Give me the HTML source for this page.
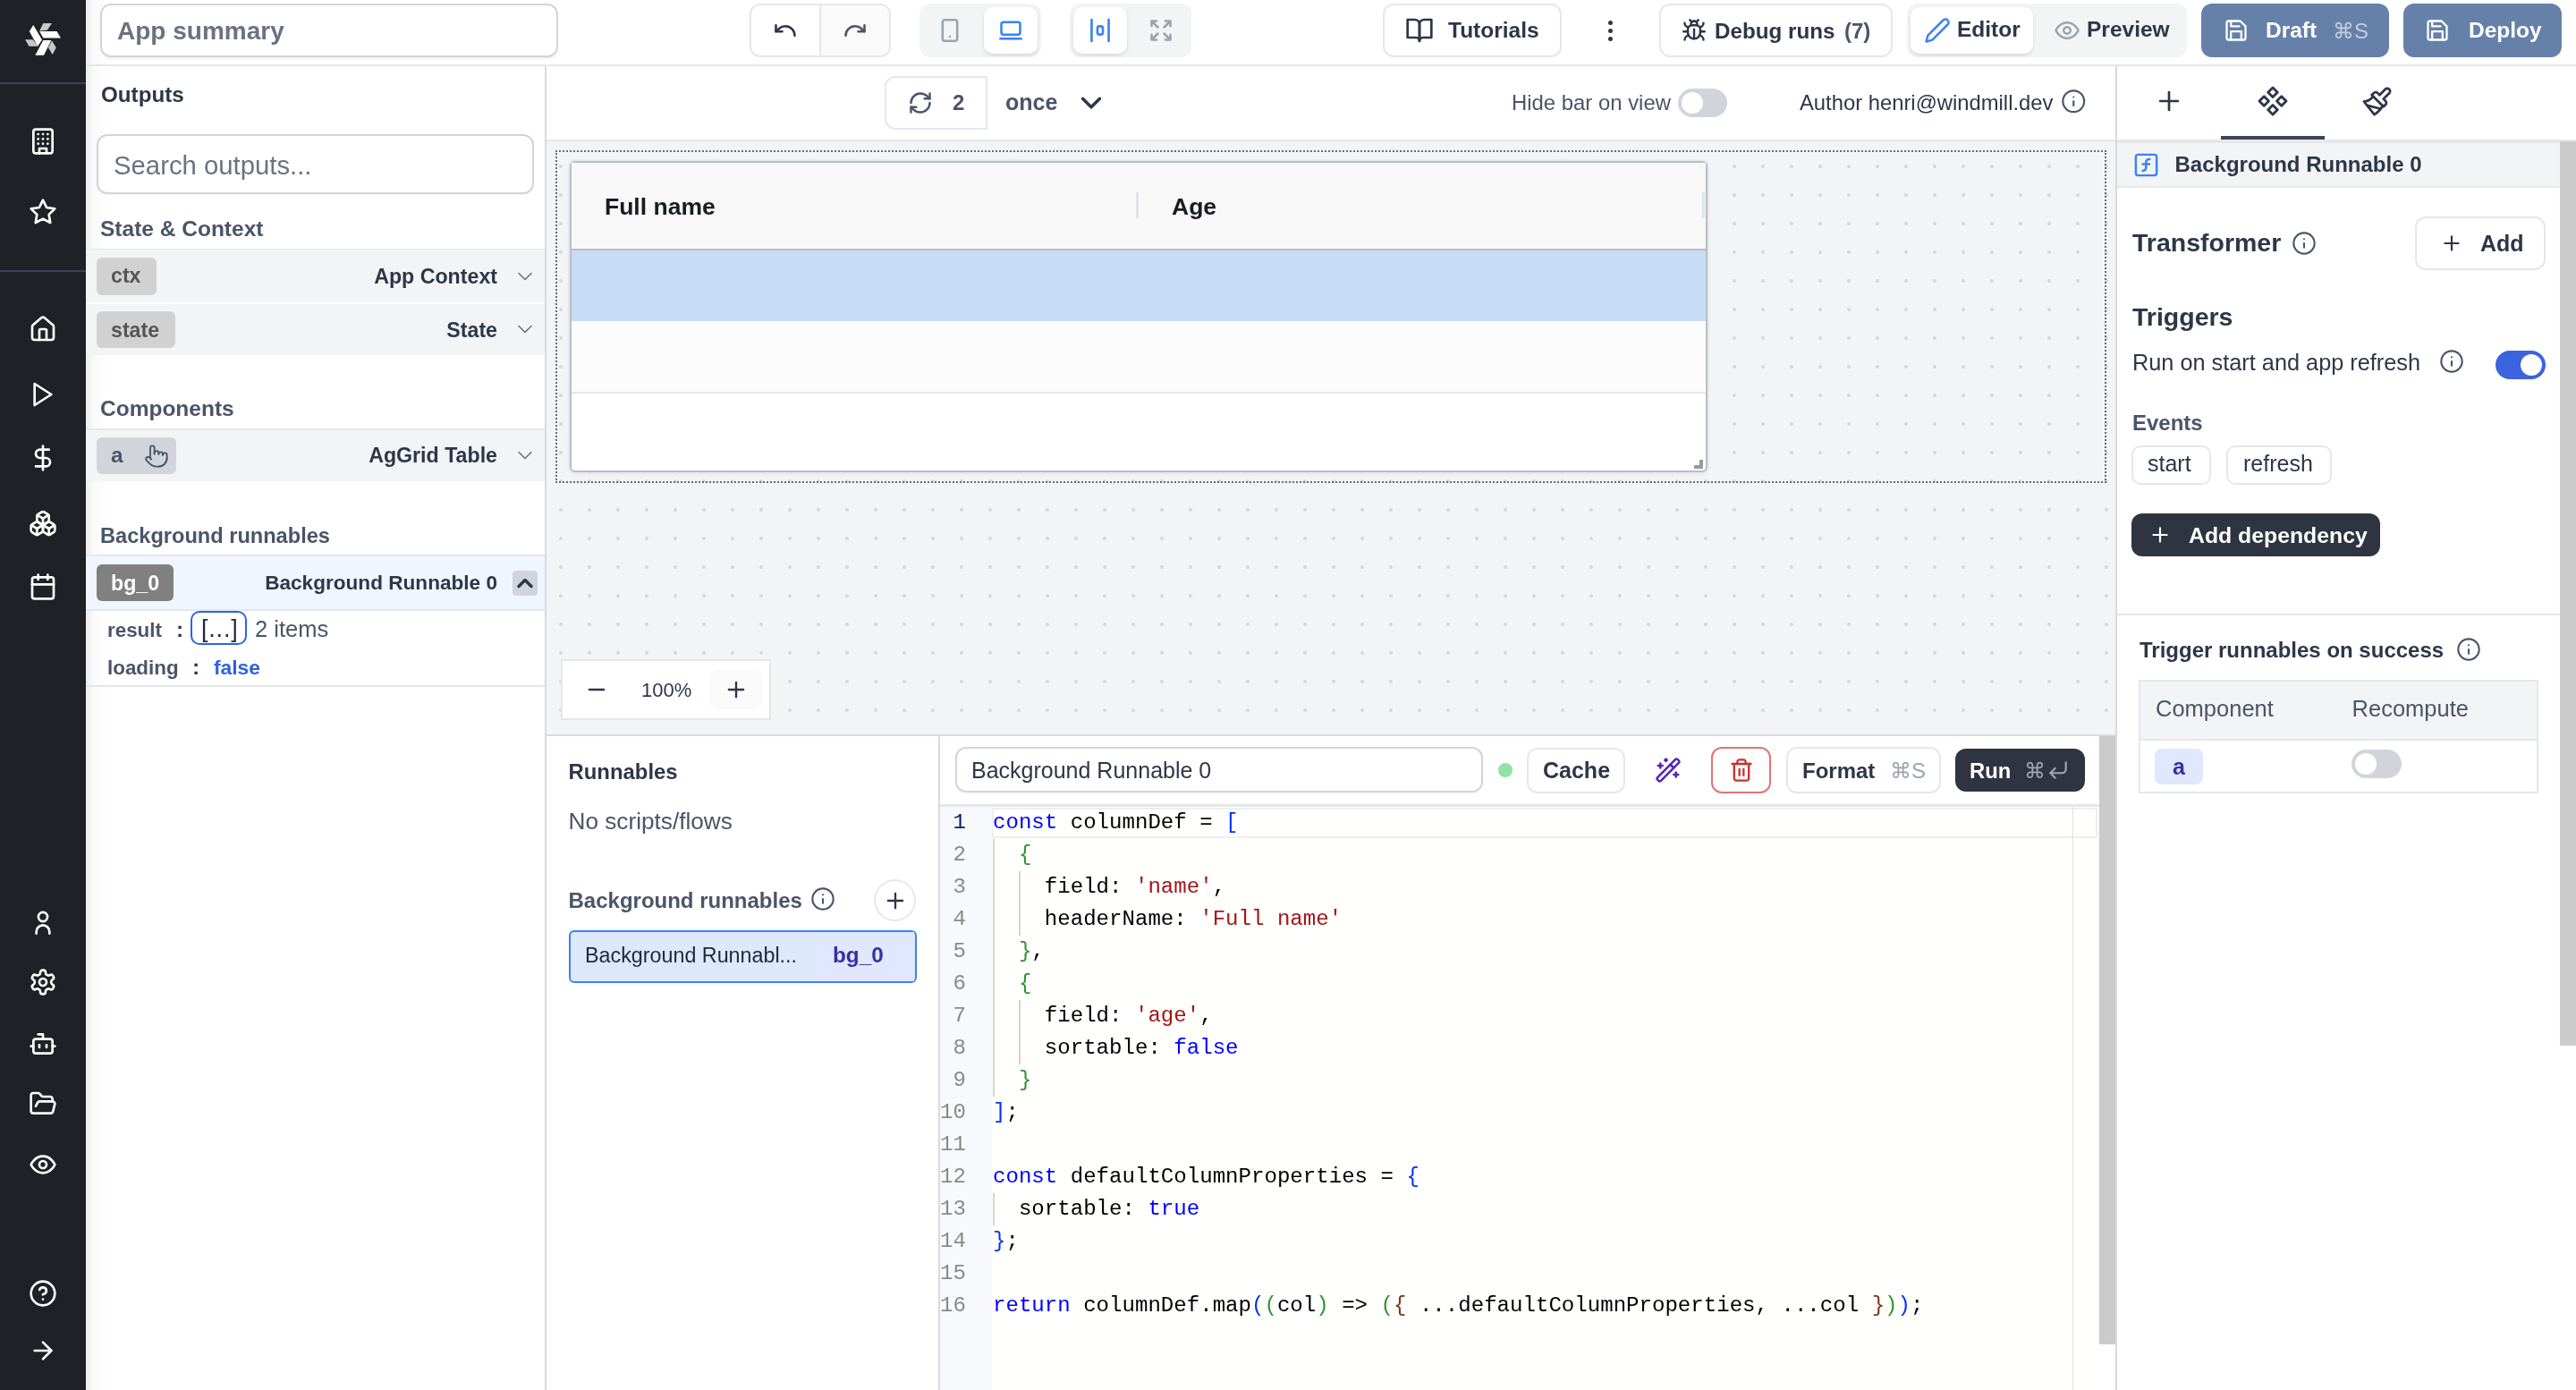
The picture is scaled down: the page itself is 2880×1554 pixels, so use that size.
<!DOCTYPE html><html><head><meta charset="utf-8"><style>
html,body{margin:0;padding:0;width:2880px;height:1554px;overflow:hidden;background:#fff;font-family:"Liberation Sans",sans-serif;}
#root{position:absolute;left:0;top:0;width:2880px;height:1554px;will-change:transform;}
*{box-sizing:border-box;}
</style></head><body><div id="root">
<div style="position:absolute;left:0px;top:0px;width:96px;height:1554px;background:#202127;border-radius:0px;box-sizing:border-box;"></div>
<div style="position:absolute;left:0px;top:92px;width:96px;height:2px;background:#3b4352;border-radius:0px;box-sizing:border-box;"></div>
<div style="position:absolute;left:0px;top:302px;width:96px;height:2px;background:#3b4352;border-radius:0px;box-sizing:border-box;"></div>
<svg style="position:absolute;left:0;top:0" width="96" height="96" viewBox="0 0 96 96">
<polygon fill="#fff" points="37.3,28 32.8,34.9 42.1,51.8 47,44.5"/>
<polygon fill="#c8c8c8" points="48.3,25.9 58,25.9 52.8,33.8 44.2,34.5"/>
<polygon fill="#fff" points="44.2,34.9 63.5,34.9 68,42.5 48.3,42.5"/>
<polygon fill="#c8c8c8" points="58,45.6 62.8,53.2 58.7,61.1 53.9,53.2"/>
<polygon fill="#fff" points="57.3,44.9 48.3,44.9 39.4,61.8 49,61.8"/>
<polygon fill="#c8c8c8" points="28,44.2 36.6,44.2 42.5,51.8 32.5,51.8"/>
</svg>
<svg style="position:absolute;left:32.00px;top:142.00px;" width="32" height="32" viewBox="0 0 24 24" fill="none" stroke="#fff" stroke-width="2" stroke-linecap="round" stroke-linejoin="round"><rect width="16" height="20" x="4" y="2" rx="2" ry="2"/><path d="M9 22v-4h6v4"/><path d="M8 6h.01"/><path d="M16 6h.01"/><path d="M12 6h.01"/><path d="M12 10h.01"/><path d="M12 14h.01"/><path d="M16 10h.01"/><path d="M16 14h.01"/><path d="M8 10h.01"/><path d="M8 14h.01"/></svg>
<svg style="position:absolute;left:32.00px;top:220.60px;" width="32" height="32" viewBox="0 0 24 24" fill="none" stroke="#fff" stroke-width="2" stroke-linecap="round" stroke-linejoin="round"><polygon points="12 2 15.09 8.26 22 9.27 17 14.14 18.18 21.02 12 17.77 5.82 21.02 7 14.14 2 9.27 8.91 8.26 12 2"/></svg>
<svg style="position:absolute;left:32.00px;top:351.70px;" width="32" height="32" viewBox="0 0 24 24" fill="none" stroke="#fff" stroke-width="2" stroke-linecap="round" stroke-linejoin="round"><path d="M15 21v-8a1 1 0 0 0-1-1h-4a1 1 0 0 0-1 1v8"/><path d="M3 10a2 2 0 0 1 .709-1.528l7-5.999a2 2 0 0 1 2.582 0l7 5.999A2 2 0 0 1 21 10v9a2 2 0 0 1-2 2H5a2 2 0 0 1-2-2z"/></svg>
<svg style="position:absolute;left:32.00px;top:424.60px;" width="32" height="32" viewBox="0 0 24 24" fill="none" stroke="#fff" stroke-width="2" stroke-linecap="round" stroke-linejoin="round"><polygon points="5 3 19 12 5 21 5 3"/></svg>
<svg style="position:absolute;left:32.00px;top:496.00px;" width="32" height="32" viewBox="0 0 24 24" fill="none" stroke="#fff" stroke-width="2" stroke-linecap="round" stroke-linejoin="round"><line x1="12" x2="12" y1="2" y2="22"/><path d="M17 5H9.5a3.5 3.5 0 0 0 0 7h5a3.5 3.5 0 0 1 0 7H6"/></svg>
<svg style="position:absolute;left:32.00px;top:569.00px;" width="32" height="32" viewBox="0 0 24 24" fill="none" stroke="#fff" stroke-width="2" stroke-linecap="round" stroke-linejoin="round"><path d="M2.97 12.92A2 2 0 0 0 2 14.63v3.24a2 2 0 0 0 .97 1.71l3 1.8a2 2 0 0 0 2.060 0L12 19v-5.5l-5-3-4.03 2.42Z"/><path d="m7 16.5-4.74-2.85"/><path d="m7 16.5 5-3"/><path d="M7 16.5v5.17"/><path d="M12 13.5V19l3.97 2.38a2 2 0 0 0 2.06 0l3-1.8a2 2 0 0 0 .97-1.71v-3.24a2 2 0 0 0-.97-1.71L17 10.5l-5 3Z"/><path d="m17 16.5-5-3"/><path d="m17 16.5 4.74-2.85"/><path d="M17 16.5v5.17"/><path d="M7.97 4.42A2 2 0 0 0 7 6.13v4.37l5 3 5-3V6.13a2 2 0 0 0-.97-1.71l-3-1.8a2 2 0 0 0-2.06 0l-3 1.8Z"/><path d="M12 8 7.26 5.15"/><path d="m12 8 4.74-2.85"/><path d="M12 13.5V8"/></svg>
<svg style="position:absolute;left:32.00px;top:640.00px;" width="32" height="32" viewBox="0 0 24 24" fill="none" stroke="#fff" stroke-width="2" stroke-linecap="round" stroke-linejoin="round"><rect width="18" height="18" x="3" y="4" rx="2" ry="2"/><line x1="16" x2="16" y1="2" y2="6"/><line x1="8" x2="8" y1="2" y2="6"/><line x1="3" x2="21" y1="10" y2="10"/></svg>
<svg style="position:absolute;left:32.00px;top:1014.50px;" width="32" height="32" viewBox="0 0 24 24" fill="none" stroke="#fff" stroke-width="2" stroke-linecap="round" stroke-linejoin="round"><circle cx="12" cy="7.5" r="3.8"/><path d="M17.5 21.5v-1.5a5.5 5.5 0 0 0-11 0v1.5"/></svg>
<svg style="position:absolute;left:32.00px;top:1081.60px;" width="32" height="32" viewBox="0 0 24 24" fill="none" stroke="#fff" stroke-width="2" stroke-linecap="round" stroke-linejoin="round"><path d="M12.22 2h-.44a2 2 0 0 0-2 2v.18a2 2 0 0 1-1 1.73l-.43.25a2 2 0 0 1-2 0l-.15-.08a2 2 0 0 0-2.73.73l-.22.38a2 2 0 0 0 .73 2.73l.15.1a2 2 0 0 1 1 1.72v.51a2 2 0 0 1-1 1.74l-.15.09a2 2 0 0 0-.73 2.730l.22.38a2 2 0 0 0 2.73.73l.15-.08a2 2 0 0 1 2 0l.43.25a2 2 0 0 1 1 1.73V20a2 2 0 0 0 2 2h.44a2 2 0 0 0 2-2v-.18a2 2 0 0 1 1-1.73l.43-.25a2 2 0 0 1 2 0l.15.08a2 2 0 0 0 2.73-.73l.22-.39a2 2 0 0 0-.73-2.73l-.15-.08a2 2 0 0 1-1-1.74v-.5a2 2 0 0 1 1-1.74l.15-.09a2 2 0 0 0 .73-2.73l-.22-.38a2 2 0 0 0-2.73-.73l-.15.08a2 2 0 0 1-2 0l-.43-.25a2 2 0 0 1-1-1.73V4a2 2 0 0 0-2-2z"/><circle cx="12" cy="12" r="3"/></svg>
<svg style="position:absolute;left:32.00px;top:1151.00px;" width="32" height="32" viewBox="0 0 24 24" fill="none" stroke="#fff" stroke-width="2" stroke-linecap="round" stroke-linejoin="round"><path d="M12 8V4H8"/><rect width="16" height="12" x="4" y="8" rx="2"/><path d="M2 14h2"/><path d="M20 14h2"/><path d="M15 13v2"/><path d="M9 13v2"/></svg>
<svg style="position:absolute;left:32.00px;top:1217.50px;" width="32" height="32" viewBox="0 0 24 24" fill="none" stroke="#fff" stroke-width="2" stroke-linecap="round" stroke-linejoin="round"><path d="m6 14 1.5-2.9A2 2 0 0 1 9.24 10H20a2 2 0 0 1 1.94 2.5l-1.54 6a2 2 0 0 1-1.95 1.5H4a2 2 0 0 1-2-2V5a2 2 0 0 1 2-2h3.9a2 2 0 0 1 1.69.9l.81 1.2a2 2 0 0 0 1.67.9H18a2 2 0 0 1 2 2v2"/></svg>
<svg style="position:absolute;left:32.00px;top:1286.00px;" width="32" height="32" viewBox="0 0 24 24" fill="none" stroke="#fff" stroke-width="2" stroke-linecap="round" stroke-linejoin="round"><path d="M2 12s3-7 10-7 10 7 10 7-3 7-10 7-10-7-10-7Z"/><circle cx="12" cy="12" r="3"/></svg>
<svg style="position:absolute;left:32.00px;top:1430.00px;" width="32" height="32" viewBox="0 0 24 24" fill="none" stroke="#fff" stroke-width="2" stroke-linecap="round" stroke-linejoin="round"><circle cx="12" cy="12" r="10"/><path d="M9.09 9a3 3 0 0 1 5.83 1c0 2-3 3-3 3"/><path d="M12 17h.01"/></svg>
<svg style="position:absolute;left:32.00px;top:1494.00px;" width="32" height="32" viewBox="0 0 24 24" fill="none" stroke="#fff" stroke-width="2" stroke-linecap="round" stroke-linejoin="round"><path d="M5 12h14"/><path d="m12 5 7 7-7 7"/></svg>
<div style="position:absolute;left:96px;top:0px;width:24px;height:74px;background:linear-gradient(to right,rgba(0,0,0,0.07),rgba(0,0,0,0.025) 35%,rgba(0,0,0,0));"></div>
<div style="position:absolute;left:96px;top:72px;width:2784px;height:2px;background:#e5e7eb;border-radius:0px;box-sizing:border-box;"></div>
<div style="position:absolute;left:112px;top:4px;width:512px;height:60px;background:#fff;border:2px solid #d1d5db;border-radius:12px;box-sizing:border-box;box-shadow:0 2px 3px rgba(0,0,0,0.06);"></div>
<div style="position:absolute;left:131px;top:21.30px;font:700 28px/28px 'Liberation Sans',sans-serif;color:#6b7280;white-space:nowrap;">App summary</div>
<div style="position:absolute;left:838px;top:4px;width:158px;height:60px;background:#fff;border:2px solid #e5e7eb;border-radius:12px;box-sizing:border-box;"></div>
<div style="position:absolute;left:918px;top:6px;width:76px;height:56px;background:#fafafa;border-radius:0 10px 10px 0"></div>
<div style="position:absolute;left:916px;top:6px;width:2px;height:56px;background:#e5e7eb;border-radius:0px;box-sizing:border-box;"></div>
<svg style="position:absolute;left:864.00px;top:20.00px;" width="28" height="28" viewBox="0 0 24 24" fill="none" stroke="#2d3748" stroke-width="2.2" stroke-linecap="round" stroke-linejoin="round"><path d="M3 7v6h6"/><path d="M21 17a9 9 0 0 0-9-9 9 9 0 0 0-6 2.3L3 13"/></svg>
<svg style="position:absolute;left:942.00px;top:20.00px;" width="28" height="28" viewBox="0 0 24 24" fill="none" stroke="#4b5563" stroke-width="2.2" stroke-linecap="round" stroke-linejoin="round"><path d="M21 7v6h-6"/><path d="M3 17a9 9 0 0 1 9-9 9 9 0 0 1 6 2.3l3 2.7"/></svg>
<div style="position:absolute;left:1028px;top:4px;width:136px;height:60px;background:#f3f4f6;border-radius:12px;box-sizing:border-box;"></div>
<div style="position:absolute;left:1100px;top:8px;width:60px;height:52px;background:#fff;border-radius:10px;box-sizing:border-box;box-shadow:0 2px 4px rgba(0,0,0,0.12);"></div>
<svg style="position:absolute;left:1048.00px;top:20.00px;" width="28" height="28" viewBox="0 0 24 24" fill="none" stroke="#9ca3af" stroke-width="2.2" stroke-linecap="round" stroke-linejoin="round"><rect width="14" height="20" x="5" y="2" rx="2" ry="2"/><path d="M12 18h.01"/></svg>
<svg style="position:absolute;left:1116.00px;top:20.00px;" width="28" height="28" viewBox="0 0 24 24" fill="none" stroke="#3b82f6" stroke-width="2.2" stroke-linecap="round" stroke-linejoin="round"><rect width="18" height="12" x="3" y="4" rx="2" ry="2"/><line x1="2" x2="22" y1="20" y2="20"/></svg>
<div style="position:absolute;left:1196px;top:4px;width:136px;height:60px;background:#f3f4f6;border-radius:12px;box-sizing:border-box;"></div>
<div style="position:absolute;left:1200px;top:8px;width:60px;height:52px;background:#fff;border-radius:10px;box-sizing:border-box;box-shadow:0 2px 4px rgba(0,0,0,0.12);"></div>
<svg style="position:absolute;left:1213px;top:18px" width="32" height="32" viewBox="0 0 24 24" fill="none" stroke="#3b82f6" stroke-width="2" stroke-linecap="round"><path d="M5.6 3v18"/><path d="M19.9 3v18"/><rect x="10.5" y="8.5" width="4.5" height="7" rx="1.6"/></svg>
<svg style="position:absolute;left:1284.00px;top:20.00px;" width="28" height="28" viewBox="0 0 24 24" fill="none" stroke="#9ca3af" stroke-width="2.2" stroke-linecap="round" stroke-linejoin="round"><path d="m21 21-6-6m6 6v-4.8m0 4.8h-4.8"/><path d="M3 16.2V21m0 0h4.8M3 21l6-6"/><path d="M21 7.8V3m0 0h-4.8M21 3l-6 6"/><path d="M3 7.8V3m0 0h4.8M3 3l6 6"/></svg>
<div style="position:absolute;left:1546px;top:4px;width:200px;height:60px;background:#fff;border:2px solid #e5e7eb;border-radius:12px;box-sizing:border-box;"></div>
<svg style="position:absolute;left:1571.00px;top:18.00px;" width="32" height="32" viewBox="0 0 24 24" fill="none" stroke="#2d3748" stroke-width="2" stroke-linecap="round" stroke-linejoin="round"><path d="M2 3h6a4 4 0 0 1 4 4v14a3 3 0 0 0-3-3H2z"/><path d="M22 3h-6a4 4 0 0 0-4 4v14a3 3 0 0 1 3-3h7z"/></svg>
<div style="position:absolute;left:1619px;top:22.26px;font:700 24.5px/24.5px 'Liberation Sans',sans-serif;color:#2d3748;white-space:nowrap;">Tutorials</div>
<div style="position:absolute;left:1797.5px;top:22.5px;width:5px;height:5px;background:#2d3748;border-radius:2.5px;box-sizing:border-box;"></div>
<div style="position:absolute;left:1797.5px;top:31.5px;width:5px;height:5px;background:#2d3748;border-radius:2.5px;box-sizing:border-box;"></div>
<div style="position:absolute;left:1797.5px;top:40.5px;width:5px;height:5px;background:#2d3748;border-radius:2.5px;box-sizing:border-box;"></div>
<div style="position:absolute;left:1855px;top:4px;width:261px;height:60px;background:#fff;border:2px solid #e5e7eb;border-radius:12px;box-sizing:border-box;"></div>
<svg style="position:absolute;left:1880.00px;top:20.00px;" width="28" height="28" viewBox="0 0 24 24" fill="none" stroke="#2d3748" stroke-width="2.1" stroke-linecap="round" stroke-linejoin="round"><path d="m8 2 1.88 1.88"/><path d="M14.12 3.88 16 2"/><path d="M9 7.13v-1a3.003 3.003 0 1 1 6 0v1"/><path d="M12 20c-3.3 0-6-2.7-6-6v-3a4 4 0 0 1 4-4h4a4 4 0 0 1 4 4v3c0 3.3-2.7 6-6 6"/><path d="M12 20v-9"/><path d="M6.53 9C4.6 8.8 3 7.1 3 5"/><path d="M6 13H2"/><path d="M3 21c0-2.1 1.7-3.9 3.8-4"/><path d="M20.97 5c0 2.1-1.6 3.8-3.5 4"/><path d="M22 13h-4"/><path d="M17.2 17c2.1.1 3.8 1.9 3.8 4"/></svg>
<div style="position:absolute;left:1917px;top:22.51px;font:700 24.2px/24.2px 'Liberation Sans',sans-serif;color:#2d3748;white-space:nowrap;">Debug runs</div>
<div style="position:absolute;left:2062px;top:22.68px;font:700 24px/24px 'Liberation Sans',sans-serif;color:#4a5568;white-space:nowrap;">(7)</div>
<div style="position:absolute;left:2132px;top:4px;width:313px;height:60px;background:#f3f4f6;border-radius:12px;box-sizing:border-box;"></div>
<div style="position:absolute;left:2136px;top:8px;width:137px;height:52px;background:#fff;border-radius:10px;box-sizing:border-box;box-shadow:0 2px 4px rgba(0,0,0,0.12);"></div>
<svg style="position:absolute;left:2151.00px;top:19.00px;" width="30" height="30" viewBox="0 0 24 24" fill="none" stroke="#3b82f6" stroke-width="2" stroke-linecap="round" stroke-linejoin="round"><path d="M17 3a2.85 2.83 0 1 1 4 4L7.5 20.5 2 22l1.5-5.5Z"/></svg>
<div style="position:absolute;left:2188px;top:21.26px;font:700 24.5px/24.5px 'Liberation Sans',sans-serif;color:#2d3748;white-space:nowrap;">Editor</div>
<svg style="position:absolute;left:2296.00px;top:19.00px;" width="30" height="30" viewBox="0 0 24 24" fill="none" stroke="#9ca3af" stroke-width="2" stroke-linecap="round" stroke-linejoin="round"><path d="M2 12s3-7 10-7 10 7 10 7-3 7-10 7-10-7-10-7Z"/><circle cx="12" cy="12" r="3"/></svg>
<div style="position:absolute;left:2333px;top:21.26px;font:700 24.5px/24.5px 'Liberation Sans',sans-serif;color:#2d3748;white-space:nowrap;">Preview</div>
<div style="position:absolute;left:2461px;top:4px;width:210px;height:60px;background:#6581a9;border-radius:12px;box-sizing:border-box;"></div>
<svg style="position:absolute;left:2486.00px;top:20.00px;" width="28" height="28" viewBox="0 0 24 24" fill="none" stroke="#fff" stroke-width="2" stroke-linecap="round" stroke-linejoin="round"><path d="M19 21H5a2 2 0 0 1-2-2V5a2 2 0 0 1 2-2h11l5 5v11a2 2 0 0 1-2 2z"/><polyline points="17 21 17 13 7 13 7 21"/><polyline points="7 3 7 8 15 8"/></svg>
<div style="position:absolute;left:2533px;top:22.26px;font:700 24.5px/24.5px 'Liberation Sans',sans-serif;color:#fff;white-space:nowrap;">Draft</div>
<div style="position:absolute;left:2608px;top:22.68px;font:400 24px/24px 'Liberation Sans',sans-serif;color:#c3cde0;white-space:nowrap;">⌘S</div>
<div style="position:absolute;left:2687px;top:4px;width:177px;height:60px;background:#6581a9;border-radius:12px;box-sizing:border-box;"></div>
<svg style="position:absolute;left:2711.00px;top:20.00px;" width="28" height="28" viewBox="0 0 24 24" fill="none" stroke="#fff" stroke-width="2" stroke-linecap="round" stroke-linejoin="round"><path d="M19 21H5a2 2 0 0 1-2-2V5a2 2 0 0 1 2-2h11l5 5v11a2 2 0 0 1-2 2z"/><polyline points="17 21 17 13 7 13 7 21"/><polyline points="7 3 7 8 15 8"/></svg>
<div style="position:absolute;left:2760px;top:22.26px;font:700 24.5px/24.5px 'Liberation Sans',sans-serif;color:#fff;white-space:nowrap;">Deploy</div>
<div style="position:absolute;left:96px;top:74px;width:513px;height:1480px;background:#fff;border-radius:0px;box-sizing:border-box;"></div>
<div style="position:absolute;left:96px;top:74px;width:24px;height:1480px;background:linear-gradient(to right,rgba(0,0,0,0.07),rgba(0,0,0,0.025) 35%,rgba(0,0,0,0));"></div>
<div style="position:absolute;left:609px;top:74px;width:2px;height:1480px;background:#dadada;border-radius:0px;box-sizing:border-box;"></div>
<div style="position:absolute;left:113px;top:94.01px;font:700 24.2px/24.2px 'Liberation Sans',sans-serif;color:#2d3748;white-space:nowrap;">Outputs</div>
<div style="position:absolute;left:108px;top:150px;width:489px;height:67px;background:#fff;border:2px solid #d1d5db;border-radius:12px;box-sizing:border-box;box-shadow:0 1px 2px rgba(0,0,0,0.05);"></div>
<div style="position:absolute;left:127px;top:169.70px;font:400 29.3px/29.3px 'Liberation Sans',sans-serif;color:#6b7280;white-space:nowrap;">Search outputs...</div>
<div style="position:absolute;left:112px;top:244.26px;font:700 24.5px/24.5px 'Liberation Sans',sans-serif;color:#4a5568;white-space:nowrap;">State &amp; Context</div>
<div style="position:absolute;left:96px;top:278px;width:513px;height:2px;background:#e5e7eb;border-radius:0px;box-sizing:border-box;"></div>
<div style="position:absolute;left:96px;top:279px;width:513px;height:59px;background:#f3f4f6;border-radius:0px;box-sizing:border-box;"></div>
<div style="position:absolute;left:108px;top:288px;width:67px;height:42px;background:#d1d1d1;border-radius:6px;box-sizing:border-box;"></div>
<div style="position:absolute;left:124px;top:296.86px;font:700 23.2px/23.2px 'Liberation Sans',sans-serif;color:#555;white-space:nowrap;">ctx</div>
<div style="position:absolute;right:2324px;top:297.86px;font:700 23.2px/23.2px 'Liberation Sans',sans-serif;color:#2d3748;white-space:nowrap;">App Context</div>
<svg style="position:absolute;left:573.00px;top:295.00px;" width="28" height="28" viewBox="0 0 24 24" fill="none" stroke="#737373" stroke-width="1.4" stroke-linecap="round" stroke-linejoin="round"><path d="m6 9 6 6 6-6"/></svg>
<div style="position:absolute;left:96px;top:338px;width:513px;height:2px;background:#fff;border-radius:0px;box-sizing:border-box;"></div>
<div style="position:absolute;left:96px;top:340px;width:513px;height:57px;background:#f3f4f6;border-radius:0px;box-sizing:border-box;"></div>
<div style="position:absolute;left:108px;top:348px;width:88px;height:41px;background:#d1d1d1;border-radius:6px;box-sizing:border-box;"></div>
<div style="position:absolute;left:124px;top:357.86px;font:700 23.2px/23.2px 'Liberation Sans',sans-serif;color:#555;white-space:nowrap;">state</div>
<div style="position:absolute;right:2324px;top:357.86px;font:700 23.2px/23.2px 'Liberation Sans',sans-serif;color:#2d3748;white-space:nowrap;">State</div>
<svg style="position:absolute;left:573.00px;top:354.00px;" width="28" height="28" viewBox="0 0 24 24" fill="none" stroke="#737373" stroke-width="1.4" stroke-linecap="round" stroke-linejoin="round"><path d="m6 9 6 6 6-6"/></svg>
<div style="position:absolute;left:112px;top:445.26px;font:700 24.5px/24.5px 'Liberation Sans',sans-serif;color:#4a5568;white-space:nowrap;">Components</div>
<div style="position:absolute;left:96px;top:479px;width:513px;height:2px;background:#e5e7eb;border-radius:0px;box-sizing:border-box;"></div>
<div style="position:absolute;left:96px;top:481px;width:513px;height:57px;background:#f3f4f6;border-radius:0px;box-sizing:border-box;"></div>
<div style="position:absolute;left:108px;top:489px;width:89px;height:41px;background:#d1d5db;border-radius:6px;box-sizing:border-box;"></div>
<div style="position:absolute;left:124px;top:497.26px;font:700 24.5px/24.5px 'Liberation Sans',sans-serif;color:#4a5568;white-space:nowrap;">a</div>
<svg style="position:absolute;left:161.00px;top:496.00px;" width="28" height="28" viewBox="0 0 24 24" fill="none" stroke="#4a5568" stroke-width="1.6" stroke-linecap="round" stroke-linejoin="round"><path d="M22 14a8 8 0 0 1-8 8"/><path d="M18 11v-1a2 2 0 0 0-2-2a2 2 0 0 0-2 2"/><path d="M14 10V9a2 2 0 0 0-2-2a2 2 0 0 0-2 2v1"/><path d="M10 9.5V4a2 2 0 0 0-2-2a2 2 0 0 0-2 2v10"/><path d="M18 11a2 2 0 1 1 4 0v3a8 8 0 0 1-8 8h-2c-2.8 0-4.5-.86-5.99-2.34l-3.6-3.6a2 2 0 0 1 2.83-2.82L7 15"/></svg>
<div style="position:absolute;right:2324px;top:498.36px;font:700 23.2px/23.2px 'Liberation Sans',sans-serif;color:#2d3748;white-space:nowrap;">AgGrid Table</div>
<svg style="position:absolute;left:573.00px;top:495.00px;" width="28" height="28" viewBox="0 0 24 24" fill="none" stroke="#737373" stroke-width="1.4" stroke-linecap="round" stroke-linejoin="round"><path d="m6 9 6 6 6-6"/></svg>
<div style="position:absolute;left:112px;top:587.62px;font:700 23.6px/23.6px 'Liberation Sans',sans-serif;color:#4a5568;white-space:nowrap;">Background runnables</div>
<div style="position:absolute;left:96px;top:620px;width:513px;height:2px;background:#e5e7eb;border-radius:0px;box-sizing:border-box;"></div>
<div style="position:absolute;left:96px;top:622px;width:513px;height:59px;background:#eff6ff;border-radius:0px;box-sizing:border-box;"></div>
<div style="position:absolute;left:108px;top:631px;width:86px;height:41px;background:#808080;border-radius:6px;box-sizing:border-box;"></div>
<div style="position:absolute;left:124px;top:640.86px;font:700 23.2px/23.2px 'Liberation Sans',sans-serif;color:#fff;white-space:nowrap;">bg_0</div>
<div style="position:absolute;right:2324px;top:641.37px;font:700 22.6px/22.6px 'Liberation Sans',sans-serif;color:#2d3748;white-space:nowrap;">Background Runnable 0</div>
<div style="position:absolute;left:573px;top:638px;width:28px;height:28px;background:#d1d5db;border-radius:4px;box-sizing:border-box;"></div>
<svg style="position:absolute;left:573.00px;top:638.00px;" width="28" height="28" viewBox="0 0 24 24" fill="none" stroke="#2d3748" stroke-width="3" stroke-linecap="round" stroke-linejoin="round"><path d="m18 15-6-6-6 6"/></svg>
<div style="position:absolute;left:96px;top:681px;width:513px;height:2px;background:#e5e7eb;border-radius:0px;box-sizing:border-box;"></div>
<div style="position:absolute;left:120px;top:693.54px;font:700 22.4px/22.4px 'Liberation Sans',sans-serif;color:#4a5568;white-space:nowrap;">result</div>
<div style="position:absolute;left:197px;top:691.76px;font:700 24.5px/24.5px 'Liberation Sans',sans-serif;color:#2d3748;white-space:nowrap;">:</div>
<div style="position:absolute;left:213px;top:683px;width:63px;height:38px;background:#fff;border:2px solid #2f62e6;border-radius:10px;box-sizing:border-box;"></div>
<div style="position:absolute;left:225px;top:690.14px;font:400 27px/27px 'Liberation Sans',sans-serif;color:#1f2937;white-space:nowrap;letter-spacing:0.8px;">[...]</div>
<div style="position:absolute;left:285px;top:690.91px;font:400 25.5px/25.5px 'Liberation Sans',sans-serif;color:#4a5568;white-space:nowrap;">2 items</div>
<div style="position:absolute;left:120px;top:735.54px;font:700 22.4px/22.4px 'Liberation Sans',sans-serif;color:#4a5568;white-space:nowrap;">loading</div>
<div style="position:absolute;left:215px;top:733.76px;font:700 24.5px/24.5px 'Liberation Sans',sans-serif;color:#2d3748;white-space:nowrap;">:</div>
<div style="position:absolute;left:239px;top:735.20px;font:700 22.8px/22.8px 'Liberation Sans',sans-serif;color:#2f62e0;white-space:nowrap;">false</div>
<div style="position:absolute;left:96px;top:766px;width:513px;height:2px;background:#e5e7eb;border-radius:0px;box-sizing:border-box;"></div>
<div style="position:absolute;left:611px;top:74px;width:1754px;height:82px;background:#fff;border-radius:0px;box-sizing:border-box;"></div>
<div style="position:absolute;left:611px;top:156px;width:1754px;height:2px;background:#e5e7eb;border-radius:0px;box-sizing:border-box;"></div>
<div style="position:absolute;left:989px;top:85px;width:115px;height:60px;border:2px solid #e5e7eb;border-radius:12px 0 0 12px;background:#fff"></div>
<svg style="position:absolute;left:1015.00px;top:101.00px;" width="28" height="28" viewBox="0 0 24 24" fill="none" stroke="#4a5568" stroke-width="2.1" stroke-linecap="round" stroke-linejoin="round"><path d="M3 12a9 9 0 0 1 9-9 9.75 9.75 0 0 1 6.74 2.74L21 8"/><path d="M21 3v5h-5"/><path d="M21 12a9 9 0 0 1-9 9 9.75 9.75 0 0 1-6.74-2.74L3 16"/><path d="M8 16H3v5"/></svg>
<div style="position:absolute;left:1065px;top:102.68px;font:700 24px/24px 'Liberation Sans',sans-serif;color:#4a5568;white-space:nowrap;">2</div>
<div style="position:absolute;left:1124px;top:101.84px;font:700 25px/25px 'Liberation Sans',sans-serif;color:#4a5568;white-space:nowrap;">once</div>
<svg style="position:absolute;left:1201.00px;top:96.00px;" width="38" height="38" viewBox="0 0 24 24" fill="none" stroke="#2d3748" stroke-width="2.2" stroke-linecap="round" stroke-linejoin="round"><path d="m6 9 6 6 6-6"/></svg>
<div style="position:absolute;left:1690px;top:103.27px;font:400 23.9px/23.9px 'Liberation Sans',sans-serif;color:#4a5568;white-space:nowrap;">Hide bar on view</div>
<div style="position:absolute;left:1876px;top:99px;width:55px;height:32px;background:#d1d5db;border-radius:16px;box-sizing:border-box;"></div>
<div style="position:absolute;left:1880px;top:103px;width:24px;height:24px;border-radius:12px;background:#fff;"></div>
<div style="position:absolute;left:2012px;top:103.35px;font:400 23.8px/23.8px 'Liberation Sans',sans-serif;color:#2d3748;white-space:nowrap;">Author henri@windmill.dev</div>
<svg style="position:absolute;left:2304.25px;top:98.75px;" width="28.5" height="28.5" viewBox="0 0 24 24" fill="none" stroke="#4a5568" stroke-width="1.8" stroke-linecap="round" stroke-linejoin="round"><circle cx="12" cy="12" r="10"/><path d="M12 16v-4"/><path d="M12 8h.01"/></svg>
<div style="position:absolute;left:611px;top:158px;width:1754px;height:663px;background-color:#f3f4f6;background-image:radial-gradient(circle,#d9d9d9 1.6px,transparent 2.4px);background-size:32px 32px;background-position:0px 12px;"></div>
<div style="position:absolute;left:611px;top:821px;width:1754px;height:2px;background:#dadada;border-radius:0px;box-sizing:border-box;"></div>
<div style="position:absolute;left:621px;top:168px;width:1734px;height:372px;border:2px dotted #6b6b6b;"></div>
<div style="position:absolute;left:637px;top:180px;width:1272px;height:348px;background:#fff;border:2px solid #b8bec6;border-radius:6px;box-sizing:border-box;overflow:hidden;box-shadow:0 0 0 2px #e8e9ed,0 2px 5px rgba(0,0,0,0.06);"></div>
<div style="position:absolute;left:639px;top:182px;width:1268px;height:96px;background:#f8f8f8;border-radius:0px;box-sizing:border-box;"></div>
<div style="position:absolute;left:639px;top:278px;width:1268px;height:2px;background:#babfc7;border-radius:0px;box-sizing:border-box;"></div>
<div style="position:absolute;left:639px;top:280px;width:1268px;height:79px;background:#c7dcf5;border-radius:0px;box-sizing:border-box;"></div>
<div style="position:absolute;left:639px;top:359px;width:1268px;height:80px;background:#fcfcfc;border-radius:0px;box-sizing:border-box;"></div>
<div style="position:absolute;left:639px;top:438px;width:1268px;height:2px;background:#e5e7eb;border-radius:0px;box-sizing:border-box;"></div>
<div style="position:absolute;left:676px;top:218.07px;font:700 26.5px/26.5px 'Liberation Sans',sans-serif;color:#181d1f;white-space:nowrap;">Full name</div>
<div style="position:absolute;left:1310px;top:218.07px;font:700 26.5px/26.5px 'Liberation Sans',sans-serif;color:#181d1f;white-space:nowrap;">Age</div>
<div style="position:absolute;left:1270px;top:215px;width:3px;height:29px;background:#dde2eb;border-radius:0px;box-sizing:border-box;"></div>
<div style="position:absolute;left:1903px;top:215px;width:3px;height:29px;background:#dde2eb;border-radius:0px;box-sizing:border-box;"></div>
<div style="position:absolute;left:1900px;top:514px;width:4px;height:10px;background:#999;border-radius:0px;box-sizing:border-box;"></div>
<div style="position:absolute;left:1894px;top:520px;width:10px;height:4px;background:#999;border-radius:0px;box-sizing:border-box;"></div>
<div style="position:absolute;left:627px;top:737px;width:235px;height:68px;background:#fff;border:2px solid #e5e7eb;border-radius:0px;box-sizing:border-box;"></div>
<svg style="position:absolute;left:653.00px;top:757.00px;" width="28" height="28" viewBox="0 0 24 24" fill="none" stroke="#2d3748" stroke-width="2" stroke-linecap="round" stroke-linejoin="round"><path d="M5 12h14"/></svg>
<div style="position:absolute;left:717px;top:760.88px;font:400 22px/22px 'Liberation Sans',sans-serif;color:#2d3748;white-space:nowrap;">100%</div>
<div style="position:absolute;left:793px;top:749px;width:60px;height:44px;background:#fafafa;border-radius:10px;box-sizing:border-box;"></div>
<svg style="position:absolute;left:809.00px;top:757.00px;" width="28" height="28" viewBox="0 0 24 24" fill="none" stroke="#2d3748" stroke-width="2" stroke-linecap="round" stroke-linejoin="round"><path d="M5 12h14"/><path d="M12 5v14"/></svg>
<div style="position:absolute;left:1049px;top:823px;width:2px;height:731px;background:#dadada;border-radius:0px;box-sizing:border-box;"></div>
<div style="position:absolute;left:635.5px;top:851.27px;font:700 23.9px/23.9px 'Liberation Sans',sans-serif;color:#2d3748;white-space:nowrap;">Runnables</div>
<div style="position:absolute;left:635.5px;top:904.52px;font:400 26.2px/26.2px 'Liberation Sans',sans-serif;color:#4a5568;white-space:nowrap;">No scripts/flows</div>
<div style="position:absolute;left:635.5px;top:994.88px;font:700 24px/24px 'Liberation Sans',sans-serif;color:#4a5568;white-space:nowrap;">Background runnables</div>
<svg style="position:absolute;left:906.00px;top:991.00px;" width="28" height="28" viewBox="0 0 24 24" fill="none" stroke="#4a5568" stroke-width="1.8" stroke-linecap="round" stroke-linejoin="round"><circle cx="12" cy="12" r="10"/><path d="M12 16v-4"/><path d="M12 8h.01"/></svg>
<div style="position:absolute;left:977px;top:983px;width:47px;height:47px;border:2px solid #e5e7eb;border-radius:50%;background:#fff"></div>
<svg style="position:absolute;left:986.50px;top:992.50px;" width="28" height="28" viewBox="0 0 24 24" fill="none" stroke="#2d3748" stroke-width="2" stroke-linecap="round" stroke-linejoin="round"><path d="M5 12h14"/><path d="M12 5v14"/></svg>
<div style="position:absolute;left:636px;top:1040px;width:389px;height:59px;background:#dde8fb;border:2px solid #3b82f6;border-radius:6px;box-sizing:border-box;"></div>
<div style="position:absolute;left:910px;top:1042px;width:112px;height:55px;background:#e0e7ff;border-radius:0px;box-sizing:border-box;"></div>
<div style="position:absolute;left:654px;top:1057.28px;font:400 23.3px/23.3px 'Liberation Sans',sans-serif;color:#1f2937;white-space:nowrap;">Background Runnabl...</div>
<div style="position:absolute;left:931px;top:1056.43px;font:700 24.3px/24.3px 'Liberation Sans',sans-serif;color:#3730a3;white-space:nowrap;">bg_0</div>
<div style="position:absolute;left:1051px;top:823px;width:1314px;height:77px;background:#fff;border-radius:0px;box-sizing:border-box;"></div>
<div style="position:absolute;left:1068px;top:835px;width:590px;height:51px;background:#fff;border:2px solid #d1d5db;border-radius:12px;box-sizing:border-box;box-shadow:0 1px 2px rgba(0,0,0,0.05);"></div>
<div style="position:absolute;left:1086px;top:848.84px;font:400 25px/25px 'Liberation Sans',sans-serif;color:#2d3748;white-space:nowrap;">Background Runnable 0</div>
<div style="position:absolute;left:1674.5px;top:853px;width:16px;height:16px;border-radius:50%;background:#8fe3a3"></div>
<div style="position:absolute;left:1707px;top:836px;width:110px;height:51px;background:#fff;border:2px solid #e5e7eb;border-radius:12px;box-sizing:border-box;"></div>
<div style="position:absolute;left:1725px;top:848.84px;font:700 25px/25px 'Liberation Sans',sans-serif;color:#2d3748;white-space:nowrap;">Cache</div>
<svg style="position:absolute;left:1850.00px;top:846.00px;" width="30" height="30" viewBox="0 0 24 24" fill="none" stroke="#5b21b6" stroke-width="2" stroke-linecap="round" stroke-linejoin="round"><path d="m21.64 3.64-1.28-1.28a1.21 1.21 0 0 0-1.72 0L2.36 18.64a1.21 1.21 0 0 0 0 1.72l1.28 1.28a1.2 1.2 0 0 0 1.72 0L21.64 5.36a1.2 1.2 0 0 0 0-1.72"/><path d="m14 7 3 3"/><path d="M5 6v4"/><path d="M19 14v4"/><path d="M10 2v2"/><path d="M7 8H3"/><path d="M21 16h-4"/><path d="M11 3H9"/></svg>
<div style="position:absolute;left:1913px;top:835px;width:67px;height:52px;background:#fff;border:2px solid #e07575;border-radius:12px;box-sizing:border-box;"></div>
<svg style="position:absolute;left:1932.50px;top:847.00px;" width="28" height="28" viewBox="0 0 24 24" fill="none" stroke="#c9302c" stroke-width="2" stroke-linecap="round" stroke-linejoin="round"><path d="M3 6h18"/><path d="M19 6v14c0 1-1 2-2 2H7c-1 0-2-1-2-2V6"/><path d="M8 6V4c0-1 1-2 2-2h4c1 0 2 1 2 2v2"/><line x1="10" x2="10" y1="11" y2="17"/><line x1="14" x2="14" y1="11" y2="17"/></svg>
<div style="position:absolute;left:1997px;top:835px;width:173px;height:52px;background:#fff;border:2px solid #e5e7eb;border-radius:12px;box-sizing:border-box;"></div>
<div style="position:absolute;left:2015px;top:849.68px;font:700 24px/24px 'Liberation Sans',sans-serif;color:#2d3748;white-space:nowrap;">Format</div>
<div style="position:absolute;left:2113px;top:849.68px;font:400 24px/24px 'Liberation Sans',sans-serif;color:#9ca3af;white-space:nowrap;">⌘S</div>
<div style="position:absolute;left:2186px;top:837px;width:145px;height:48px;background:#2e3440;border-radius:12px;box-sizing:border-box;"></div>
<div style="position:absolute;left:2202px;top:849.85px;font:700 23.8px/23.8px 'Liberation Sans',sans-serif;color:#fff;white-space:nowrap;">Run</div>
<div style="position:absolute;left:2263px;top:849.68px;font:400 24px/24px 'Liberation Sans',sans-serif;color:#a0a6b0;white-space:nowrap;">⌘</div>
<svg style="position:absolute;left:2288.00px;top:848.00px;" width="26" height="26" viewBox="0 0 24 24" fill="none" stroke="#a0a6b0" stroke-width="2" stroke-linecap="round" stroke-linejoin="round"><polyline points="9 10 4 15 9 20"/><path d="M20 4v7a4 4 0 0 1-4 4H4"/></svg>
<div style="position:absolute;left:1051px;top:899px;width:1296px;height:3px;background:#e5e7eb;border-radius:0px;box-sizing:border-box;"></div>
<div style="position:absolute;left:1051px;top:902px;width:1296px;height:652px;background:#fffffe;border-radius:0px;box-sizing:border-box;"></div>
<div style="position:absolute;left:1051px;top:902px;width:58px;height:652px;background:#f8f9fc;border-radius:0px;box-sizing:border-box;"></div>
<div style="position:absolute;left:1109px;top:903px;width:1236px;height:34px;border:2px solid #eeeeee;"></div>
<div style="position:absolute;left:2317px;top:902px;width:1px;height:652px;background:#e0e0e0;border-radius:0px;box-sizing:border-box;"></div>
<div style="position:absolute;left:2347px;top:823px;width:18px;height:680px;background:#cbcbcb;border-radius:0px;box-sizing:border-box;"></div>
<div style="position:absolute;left:2365px;top:823px;width:2px;height:731px;background:#dadada;border-radius:0px;box-sizing:border-box;"></div>
<div style="position:absolute;left:1110px;top:938px;width:2px;height:288px;background:#d3d3d3;border-radius:0px;box-sizing:border-box;"></div>
<div style="position:absolute;left:1139px;top:974px;width:2px;height:72px;background:#d3d3d3;border-radius:0px;box-sizing:border-box;"></div>
<div style="position:absolute;left:1139px;top:1118px;width:2px;height:72px;background:#d3d3d3;border-radius:0px;box-sizing:border-box;"></div>
<div style="position:absolute;left:1110px;top:1334px;width:2px;height:36px;background:#d3d3d3;border-radius:0px;box-sizing:border-box;"></div>
<pre style="position:absolute;left:1110px;top:902.2px;margin:0;font:400 24.08px/36px 'Liberation Mono',monospace;color:#000;white-space:pre;"><span style="color:#0000ff">const</span> columnDef = <span style="color:#0431fa">[</span>
  <span style="color:#319331">{</span>
    field: <span style="color:#a31515">&#x27;name&#x27;</span>,
    headerName: <span style="color:#a31515">&#x27;Full name&#x27;</span>
  <span style="color:#319331">}</span>,
  <span style="color:#319331">{</span>
    field: <span style="color:#a31515">&#x27;age&#x27;</span>,
    sortable: <span style="color:#0000ff">false</span>
  <span style="color:#319331">}</span>
<span style="color:#0431fa">]</span>;
&#8203;
<span style="color:#0000ff">const</span> defaultColumnProperties = <span style="color:#0431fa">{</span>
  sortable: <span style="color:#0000ff">true</span>
<span style="color:#0431fa">}</span>;
&#8203;
<span style="color:#0000ff">return</span> columnDef.map<span style="color:#0431fa">(</span><span style="color:#319331">(</span>col<span style="color:#319331">)</span> =&gt; <span style="color:#319331">(</span><span style="color:#7b3814">{</span> ...defaultColumnProperties, ...col <span style="color:#7b3814">}</span><span style="color:#319331">)</span><span style="color:#0431fa">)</span>;</pre>
<pre style="position:absolute;left:1030px;top:902.2px;width:50px;text-align:right;margin:0;font:400 24.08px/36px 'Liberation Mono',monospace;color:#8a8a8a;white-space:pre;">&#8203;
2
3
4
5
6
7
8
9
10
11
12
13
14
15
16</pre>
<pre style="position:absolute;left:1030px;top:902.2px;width:50px;text-align:right;margin:0;font:400 24.08px/36px 'Liberation Mono',monospace;color:#0b216f;white-space:pre;">1</pre>
<div style="position:absolute;left:2367px;top:74px;width:513px;height:1480px;background:#fff;border-radius:0px;box-sizing:border-box;"></div>
<div style="position:absolute;left:2365px;top:74px;width:2px;height:1480px;background:#dadada;border-radius:0px;box-sizing:border-box;"></div>
<div style="position:absolute;left:2367px;top:156px;width:513px;height:4px;background:#e5e7eb;border-radius:0px;box-sizing:border-box;"></div>
<svg style="position:absolute;left:2408.00px;top:96.00px;" width="34" height="34" viewBox="0 0 24 24" fill="none" stroke="#2d3748" stroke-width="1.9" stroke-linecap="round" stroke-linejoin="round"><path d="M5 12h14"/><path d="M12 5v14"/></svg>
<svg style="position:absolute;left:2523.00px;top:95.00px;" width="36" height="36" viewBox="0 0 24 24" fill="none" stroke="#2d3748" stroke-width="1.9" stroke-linecap="round" stroke-linejoin="round"><path d="M5.5 8.5 9 12l-3.5 3.5L2 12l3.5-3.5Z"/><path d="m12 2 3.5 3.5L12 9 8.5 5.5 12 2Z"/><path d="M18.5 8.5 22 12l-3.5 3.5L15 12l3.5-3.5Z"/><path d="m12 15 3.5 3.5L12 22l-3.5-3.5L12 15Z"/></svg>
<svg style="position:absolute;left:2639.50px;top:95.50px;" width="35" height="35" viewBox="0 0 24 24" fill="none" stroke="#2d3748" stroke-width="1.9" stroke-linecap="round" stroke-linejoin="round"><path d="M18.37 2.63 14 7l-1.59-1.59a2 2 0 0 0-2.82 0L8 7l9 9 1.59-1.59a2 2 0 0 0 0-2.82L17 10l4.37-4.37a2.12 2.12 0 1 0-3-3Z"/><path d="M9 8c-2 3-4 3.5-7 4l8 10c2-1 6-5 6-7"/><path d="M14.5 17.5 4.5 15"/></svg>
<div style="position:absolute;left:2483px;top:152px;width:116px;height:4px;background:#3b4658;border-radius:0px;box-sizing:border-box;"></div>
<div style="position:absolute;left:2367px;top:160px;width:495px;height:49px;background:#f3f4f6;border-radius:0px;box-sizing:border-box;"></div>
<div style="position:absolute;left:2367px;top:208px;width:495px;height:2px;background:#e5e7eb;border-radius:0px;box-sizing:border-box;"></div>
<svg style="position:absolute;left:2383.50px;top:168.50px;" width="31" height="31" viewBox="0 0 24 24" fill="none" stroke="#3b82f6" stroke-width="1.9" stroke-linecap="round" stroke-linejoin="round"><rect width="18" height="18" x="3" y="3" rx="2" ry="2"/><path d="M9 17c2 0 2.8-1 2.8-2.8V10c0-2 1-3.3 3.2-3"/><path d="M9 11.2h5.7"/></svg>
<div style="position:absolute;left:2431.5px;top:171.68px;font:700 24px/24px 'Liberation Sans',sans-serif;color:#2d3748;white-space:nowrap;">Background Runnable 0</div>
<div style="position:absolute;left:2862px;top:158px;width:18px;height:1011px;background:#cbcbcb;border-radius:0px;box-sizing:border-box;"></div>
<div style="position:absolute;left:2384px;top:257.27px;font:700 28.5px/28.5px 'Liberation Sans',sans-serif;color:#2d3748;white-space:nowrap;">Transformer</div>
<svg style="position:absolute;left:2562.00px;top:258.00px;" width="28" height="28" viewBox="0 0 24 24" fill="none" stroke="#4a5568" stroke-width="1.8" stroke-linecap="round" stroke-linejoin="round"><circle cx="12" cy="12" r="10"/><path d="M12 16v-4"/><path d="M12 8h.01"/></svg>
<div style="position:absolute;left:2700px;top:242px;width:146px;height:60px;background:#fff;border:2px solid #e5e7eb;border-radius:12px;box-sizing:border-box;"></div>
<svg style="position:absolute;left:2728.00px;top:258.50px;" width="26" height="26" viewBox="0 0 24 24" fill="none" stroke="#2d3748" stroke-width="2" stroke-linecap="round" stroke-linejoin="round"><path d="M5 12h14"/><path d="M12 5v14"/></svg>
<div style="position:absolute;left:2773px;top:259.84px;font:700 25px/25px 'Liberation Sans',sans-serif;color:#2d3748;white-space:nowrap;">Add</div>
<div style="position:absolute;left:2384px;top:339.87px;font:700 28.5px/28.5px 'Liberation Sans',sans-serif;color:#2d3748;white-space:nowrap;">Triggers</div>
<div style="position:absolute;left:2384px;top:392.98px;font:400 25.3px/25.3px 'Liberation Sans',sans-serif;color:#2d3748;white-space:nowrap;">Run on start and app refresh</div>
<svg style="position:absolute;left:2727.00px;top:390.00px;" width="28" height="28" viewBox="0 0 24 24" fill="none" stroke="#4a5568" stroke-width="1.8" stroke-linecap="round" stroke-linejoin="round"><circle cx="12" cy="12" r="10"/><path d="M12 16v-4"/><path d="M12 8h.01"/></svg>
<div style="position:absolute;left:2790px;top:392px;width:56px;height:32px;background:#3b63dd;border-radius:16px;box-sizing:border-box;"></div>
<div style="position:absolute;left:2818px;top:396px;width:24px;height:24px;border-radius:12px;background:#fff;"></div>
<div style="position:absolute;left:2384px;top:461.38px;font:700 24px/24px 'Liberation Sans',sans-serif;color:#4a5568;white-space:nowrap;">Events</div>
<div style="position:absolute;left:2383px;top:498px;width:89px;height:44px;background:#fff;border:2px solid #e5e7eb;border-radius:10px;box-sizing:border-box;"></div>
<div style="position:absolute;left:2401px;top:505.84px;font:400 25px/25px 'Liberation Sans',sans-serif;color:#2d3748;white-space:nowrap;">start</div>
<div style="position:absolute;left:2489px;top:498px;width:118px;height:44px;background:#fff;border:2px solid #e5e7eb;border-radius:10px;box-sizing:border-box;"></div>
<div style="position:absolute;left:2508px;top:505.84px;font:400 25px/25px 'Liberation Sans',sans-serif;color:#2d3748;white-space:nowrap;">refresh</div>
<div style="position:absolute;left:2383px;top:574px;width:278px;height:48px;background:#2e3440;border-radius:12px;box-sizing:border-box;"></div>
<svg style="position:absolute;left:2402.00px;top:585.00px;" width="26" height="26" viewBox="0 0 24 24" fill="none" stroke="#fff" stroke-width="2" stroke-linecap="round" stroke-linejoin="round"><path d="M5 12h14"/><path d="M12 5v14"/></svg>
<div style="position:absolute;left:2447px;top:587.01px;font:700 24.8px/24.8px 'Liberation Sans',sans-serif;color:#fff;white-space:nowrap;">Add dependency</div>
<div style="position:absolute;left:2367px;top:686px;width:495px;height:2px;background:#e5e7eb;border-radius:0px;box-sizing:border-box;"></div>
<div style="position:absolute;left:2392px;top:715.38px;font:700 24px/24px 'Liberation Sans',sans-serif;color:#2d3748;white-space:nowrap;">Trigger runnables on success</div>
<svg style="position:absolute;left:2745.60px;top:712.00px;" width="28" height="28" viewBox="0 0 24 24" fill="none" stroke="#4a5568" stroke-width="1.8" stroke-linecap="round" stroke-linejoin="round"><circle cx="12" cy="12" r="10"/><path d="M12 16v-4"/><path d="M12 8h.01"/></svg>
<div style="position:absolute;left:2391px;top:760px;width:447px;height:127px;background:#fff;border:2px solid #e5e7eb;border-radius:0px;box-sizing:border-box;"></div>
<div style="position:absolute;left:2393px;top:762px;width:443px;height:65px;background:#f3f4f6;border-radius:0px;box-sizing:border-box;"></div>
<div style="position:absolute;left:2393px;top:826px;width:443px;height:2px;background:#e5e7eb;border-radius:0px;box-sizing:border-box;"></div>
<div style="position:absolute;left:2410px;top:780.11px;font:400 25.5px/25.5px 'Liberation Sans',sans-serif;color:#4a5568;white-space:nowrap;">Component</div>
<div style="position:absolute;left:2629.6px;top:780.11px;font:400 25.5px/25.5px 'Liberation Sans',sans-serif;color:#4a5568;white-space:nowrap;">Recompute</div>
<div style="position:absolute;left:2409px;top:837px;width:54px;height:40px;background:#e0e7ff;border-radius:8px;box-sizing:border-box;"></div>
<div style="position:absolute;left:2429px;top:844.84px;font:700 25px/25px 'Liberation Sans',sans-serif;color:#3730a3;white-space:nowrap;">a</div>
<div style="position:absolute;left:2629px;top:838px;width:56px;height:32px;background:#d1d5db;border-radius:16px;box-sizing:border-box;"></div>
<div style="position:absolute;left:2633px;top:842px;width:24px;height:24px;border-radius:12px;background:#fff;"></div>
</div></body></html>
